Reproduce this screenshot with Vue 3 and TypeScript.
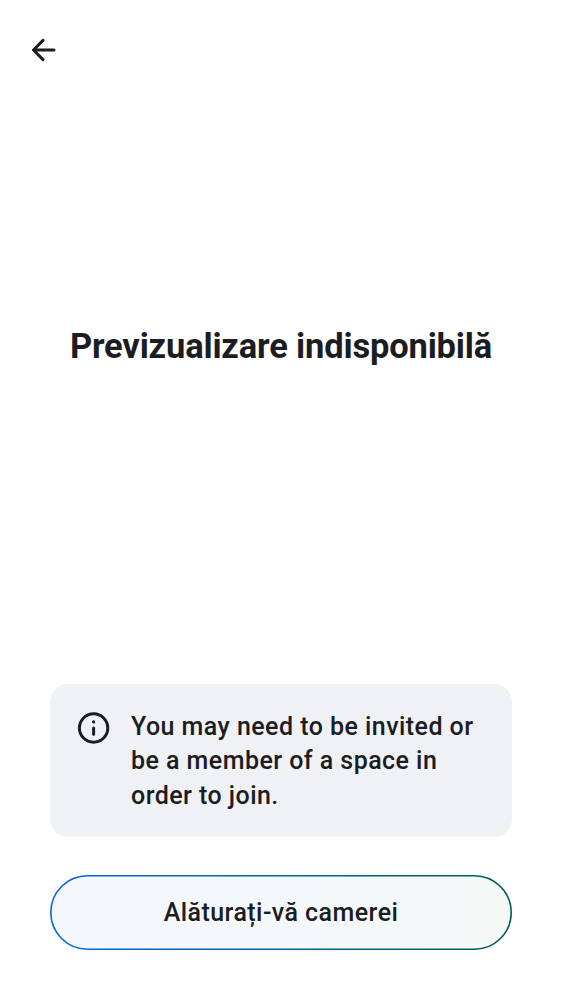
<script setup lang="ts">
const title: string = 'Previzualizare indisponibilă'
const noticeLines: string[] = ['You may need to be invited or', 'be a member of a space in', 'order to join.']
const action: string = 'Alăturați-vă camerei'
</script>

<template>
  <main class="screen">
    <header class="top">
      <button class="back" aria-label="Înapoi">
        <svg width="24" height="24" viewBox="0 0 24 24" fill="none" stroke="#1b1d22" stroke-width="3" stroke-linecap="round" stroke-linejoin="round">
          <path d="M22 12H2M11 2.4L1.5 12l9.5 9.6" />
        </svg>
      </button>
    </header>
    <section class="middle">
      <h1>{{ title }}</h1>
    </section>
    <footer class="bottom">
      <div class="notice">
        <svg class="info" width="34" height="34" viewBox="0 0 34 34" fill="none">
          <circle cx="17.6" cy="17" r="14.2" stroke="#1b1d22" stroke-width="3" />
          <circle cx="17.6" cy="10.9" r="1.6" fill="#1b1d22" />
          <path d="M17.6 17v6.3" stroke="#1b1d22" stroke-width="3" stroke-linecap="round" />
        </svg>
        <p><span v-for="line in noticeLines" :key="line">{{ line }}</span></p>
      </div>
      <button class="join">
        <svg class="outline" width="462" height="75" viewBox="0 0 462 75" aria-hidden="true">
          <defs>
            <linearGradient id="edge">
              <stop offset="0" stop-color="#0467dd" />
              <stop offset="1" stop-color="#00614b" />
            </linearGradient>
            <linearGradient id="tint">
              <stop offset="0" stop-color="#f4f8fe" />
              <stop offset="1" stop-color="#f4f8f7" />
            </linearGradient>
          </defs>
          <rect x="0.8" y="0.8" width="460.4" height="73.4" rx="36.7" fill="url(#tint)" stroke="url(#edge)" stroke-width="1.6" />
        </svg>
        <span class="label">{{ action }}</span>
      </button>
    </footer>
  </main>
</template>

<style>
body {
  background: #fff;
}
</style>

<style scoped>
.screen {
  box-sizing: border-box;
  height: 1000px;
  display: flex;
  flex-direction: column;
  padding: 38px 50px 50px;
  background: #fff;
  color: #1b1d22;
  font-family: Roboto, "Liberation Sans", sans-serif;
}
.top {
  height: 24px;
  margin-left: -18px;
}
.back {
  display: block;
  padding: 0;
  border: 0;
  background: none;
}
.back svg {
  display: block;
}
.middle {
  flex: 1;
  padding-top: 262px;
}
h1 {
  margin: 0;
  text-align: center;
  white-space: nowrap;
  font-size: 34.5px;
  line-height: 44px;
  font-weight: 700;
  letter-spacing: -0.17px;
}
.notice {
  box-sizing: border-box;
  height: 153px;
  display: flex;
  align-items: flex-start;
  padding: 25px 26px;
  border-radius: 18px;
  background: #f0f1f5;
}
.info {
  flex: none;
  margin: 2px 21px 0 0;
}
.notice p {
  margin: 1px 0 0;
  font-size: 25px;
  line-height: 34.4px;
  font-weight: 480;
  letter-spacing: 0.45px;
}
.notice span {
  display: block;
  white-space: nowrap;
}
.join {
  position: relative;
  display: flex;
  align-items: center;
  justify-content: center;
  width: 100%;
  height: 75px;
  margin-top: 38px;
  padding: 0;
  border: 0;
  background: none;
  color: #1b1d22;
  font: 480 25px/34px Roboto, "Liberation Sans", sans-serif;
  letter-spacing: 0.45px;
}
.outline {
  position: absolute;
  inset: 0;
}
.label {
  position: relative;
}
</style>
